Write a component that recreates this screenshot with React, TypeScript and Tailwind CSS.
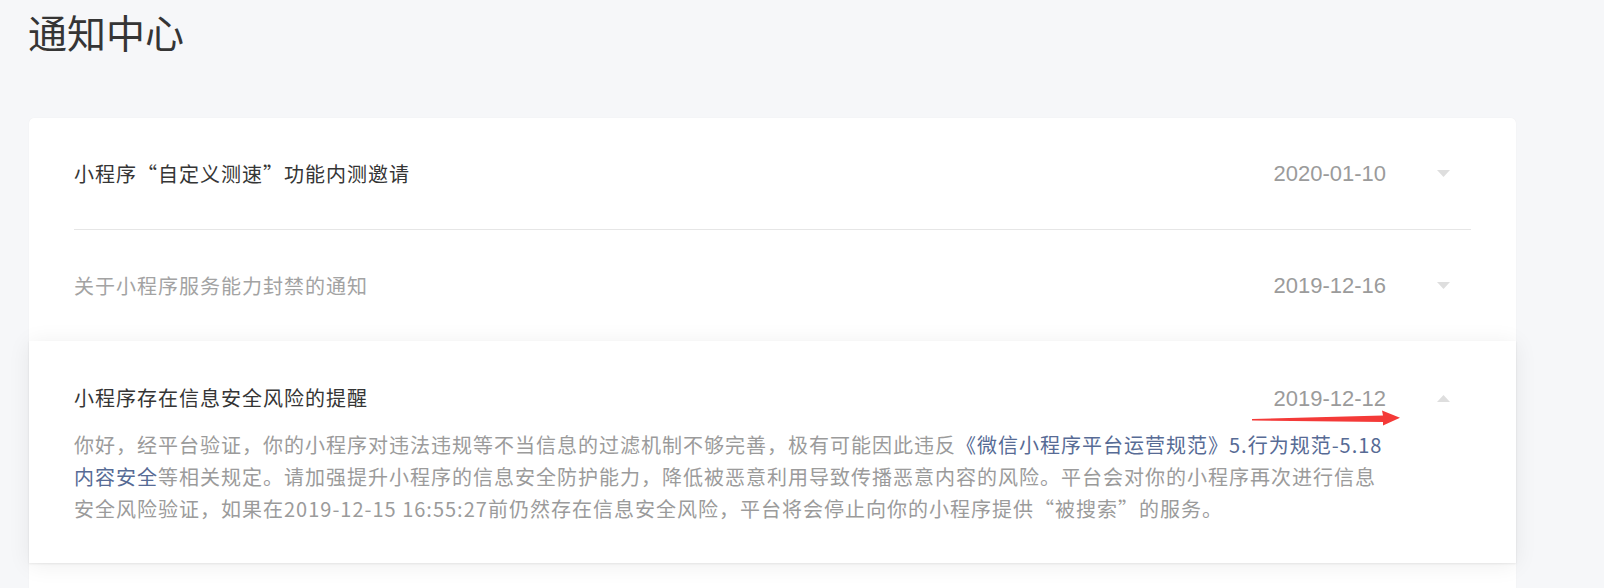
import type { ReactNode } from 'react';

interface Notice {
  title: string;
  date: string;
  read?: boolean;
  body?: ReactNode;
}

const cjk = 'font-["Noto_Sans_CJK_SC","Noto_Sans",sans-serif]';

const Caret = ({ up }: { up?: boolean }) => (
  <svg width="13" height="7" viewBox="0 0 13 7" className="shrink-0">
    <polygon
      points={up ? '0,7 6.5,0 13,7' : '0,0 13,0 6.5,7'}
      fill="#dedede"
    />
  </svg>
);

const body = (
  <>
    你好，经平台验证，你的小程序对违法违规等不当信息的过滤机制不够完善，极有可能因此违反
    <span className="text-[#576b95]">《微信小程序平台运营规范》5.行为规范-5.18</span>
    <br />
    <span className="text-[#576b95]">内容安全</span>
    等相关规定。请加强提升小程序的信息安全防护能力，降低被恶意利用导致传播恶意内容的风险。平台会对你的小程序再次进行信息
    <br />
    安全风险验证，如果在2019-12-15 16:55:27前仍然存在信息安全风险，平台将会停止向你的小程序提供“被搜索”的服务。
  </>
);

const notices: Notice[] = [
  { title: '小程序“自定义测速”功能内测邀请', date: '2020-01-10' },
  { title: '关于小程序服务能力封禁的通知', date: '2019-12-16', read: true },
  { title: '小程序存在信息安全风险的提醒', date: '2019-12-12', body },
];

function NoticeRow({ notice, last }: { notice: Notice; last: boolean }) {
  const open = !!notice.body;

  if (open) {
    return (
      <div className="relative z-10 bg-white px-[45px] pt-[41px] pb-[38px] shadow-[0_1px_2px_rgba(0,0,0,0.08),0_2px_22px_rgba(0,0,0,0.07)]">
        <div className="flex items-center h-[32px]">
          <p className="flex-1 text-[20px] tracking-[1px] text-[#353535]">
            {notice.title}
          </p>
          <span className='font-["Liberation_Sans",sans-serif] text-[22px] text-[#9b9b9b] mr-[51px]'>
            {notice.date}
          </span>
          <div className="w-[34px] flex justify-start">
            <Caret up />
          </div>
        </div>
        <p className="mt-[15px] text-[20px] tracking-[1px] leading-[32px] text-[#9b9b9b] whitespace-nowrap">
          {notice.body}
        </p>
      </div>
    );
  }

  return (
    <div className="px-[45px]">
      <div
        className={`flex items-center pt-[39px] pb-[39px] ${
          last ? '' : 'border-b border-[#e6e6e6]'
        }`}
      >
        <p
          className={`flex-1 h-[32px] leading-[32px] text-[20px] tracking-[1px] ${
            notice.read ? 'text-[#a3a3a3]' : 'text-[#353535]'
          }`}
        >
          {notice.title}
        </p>
        <span className='font-["Liberation_Sans",sans-serif] text-[22px] text-[#9b9b9b] mr-[51px]'>
          {notice.date}
        </span>
        <div className="w-[34px] flex justify-start">
          <Caret />
        </div>
      </div>
    </div>
  );
}

export default function App() {
  return (
    <div className={`${cjk} relative min-h-[588px] h-[588px] overflow-hidden bg-[#f6f7f9] pl-[29px] pr-[88px] pt-[8px]`}>
      <h1 className="text-[39px] leading-[47px] text-[#353535] -ml-[1px]">
        通知中心
      </h1>

      <div className="mt-[63px] bg-white rounded-[5px] shadow-[0_0_1px_rgba(0,0,0,0.08)]">
        {notices.map((n, i) => (
          <NoticeRow key={n.date} notice={n} last={i === 1} />
        ))}
        <div className="h-[60px] bg-white" />
      </div>

      {/* annotation arrow */}
      <svg
        className="absolute z-20 left-[1248px] top-[406px] pointer-events-none"
        width="156"
        height="24"
        viewBox="1248 406 156 24"
      >
        <polygon
          points="1252,419 1383,415.5 1382,410.5 1400,417.8 1383,425.5 1383,422 1252,420.6"
          fill="#f43a38"
        />
      </svg>
    </div>
  );
}
